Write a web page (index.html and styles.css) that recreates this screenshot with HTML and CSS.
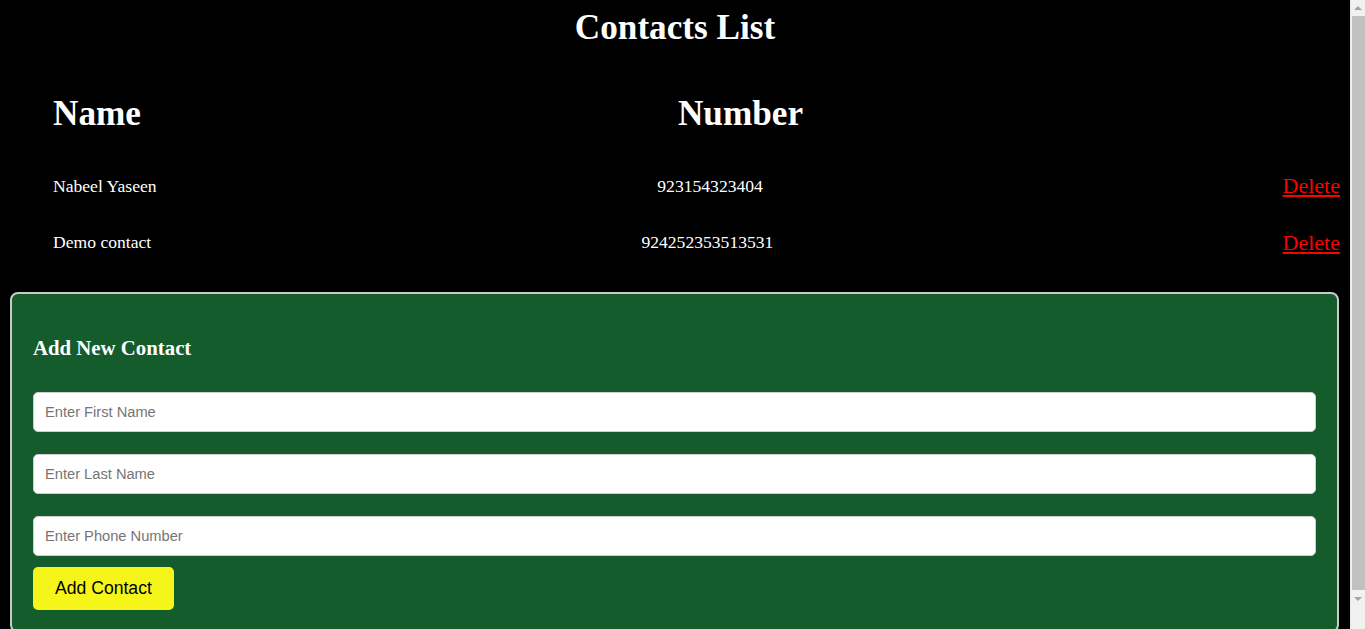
FILE: index.html
```html
<!DOCTYPE html>
<html lang="en">
<head>
<meta charset="utf-8">
<title>Contacts List</title>
<link rel="stylesheet" href="styles.css">
</head>
<body>
  <main class="page">
    <h1 class="title">Contacts List</h1>
    <section class="list">
      <div class="list-head">
        <h2 class="col col-name">Name</h2>
        <h2 class="col col-number">Number</h2>
      </div>
      <div class="rows">
        <div class="row">
          <span class="col col-name">Nabeel Yaseen</span>
          <span class="col col-number">923154323404</span>
          <span class="col col-action"><a href="#" class="delete">Delete</a></span>
        </div>
        <div class="row">
          <span class="col col-name">Demo contact</span>
          <span class="col col-number">924252353513531</span>
          <span class="col col-action"><a href="#" class="delete">Delete</a></span>
        </div>
      </div>
    </section>
    <section class="panel">
      <h3 class="panel-title">Add New Contact</h3>
      <form class="form">
        <input class="field" type="text" placeholder="Enter First Name">
        <input class="field" type="text" placeholder="Enter Last Name">
        <input class="field" type="text" placeholder="Enter Phone Number">
        <button class="add-btn" type="button">Add Contact</button>
      </form>
    </section>
  </main>
  <div class="scrollbar" aria-hidden="true">
    <div class="sb-arrow sb-up"></div>
    <div class="sb-thumb"></div>
    <div class="sb-arrow sb-down"></div>
  </div>
</body>
</html>
```

FILE: styles.css
```css
html {
  background: #000;
}

body {
  margin: 0;
  background: #000;
  color: #fff;
  font-family: "Liberation Serif", "Times New Roman", serif;
}

.page {
  margin-right: 15px;
  padding-top: 8px;
  padding-bottom: 19px;
}

.title {
  margin: 0;
  font-size: 35.2px;
  font-weight: bold;
  text-align: center;
}

.list {
  padding: 0 10px 0 53px;
}

.list-head {
  display: flex;
  margin-top: 45.5px;
}

.list-head h2 {
  margin: 0;
  font-size: 35.2px;
  font-weight: bold;
}

.col-name {
  flex: 0 0 auto;
  text-align: left;
}

.col-number {
  flex: 1 1 auto;
  text-align: center;
}

.col-action {
  flex: 0 0 auto;
  text-align: right;
  padding-left: 19px;
}

.rows {
  display: flex;
  flex-direction: column;
  gap: 30.7px;
  margin-top: 39.5px;
}

.row {
  display: flex;
  align-items: center;
  font-size: 17.6px;
}

.delete {
  color: #ff0000;
  font-size: 22px;
  text-decoration: underline;
}

.panel {
  margin: 36.5px 11px 0 10px;
  padding: 0 21px 21px;
  border: 2px solid #c9c9c9;
  border-radius: 8px;
  background: #155c2d;
}

.panel-title {
  margin: 0;
  padding-top: 41.8px;
  font-size: 20.8px;
  font-weight: bold;
}

.form {
  display: flex;
  flex-direction: column;
  margin-top: 20.8px;
}

.field {
  box-sizing: border-box;
  height: 40px;
  margin: 11px 0;
  padding: 0 11px;
  border: 1px solid #cfcfcf;
  border-radius: 5px;
  background: #fff;
  font-family: "Liberation Sans", Arial, sans-serif;
  font-size: 14.67px;
  color: #000;
}

.field::placeholder {
  color: #757575;
}

.add-btn {
  align-self: flex-start;
  margin: 0;
  padding: 11px 22px;
  border: 0;
  border-radius: 5px;
  background: #f5f51a;
  color: #000;
  font-family: "Liberation Sans", Arial, sans-serif;
  font-size: 17.6px;
  line-height: 21px;
}

/* browser scrollbar as shown in the screenshot */
.scrollbar {
  position: fixed;
  top: 0;
  right: 0;
  bottom: 0;
  width: 15px;
  background: #f1f1f1;
  display: flex;
  flex-direction: column;
  align-items: center;
  border-left: 1px solid #e8e8e8;
  box-sizing: border-box;
}

.sb-arrow {
  flex: 0 0 16px;
  width: 100%;
  position: relative;
}

.sb-up::after,
.sb-down::after {
  content: "";
  position: absolute;
  left: 50%;
  margin-left: -4px;
  border-left: 4px solid transparent;
  border-right: 4px solid transparent;
}

.sb-up::after {
  top: 6px;
  border-bottom: 4px solid #a3a3a3;
}

.sb-down::after {
  bottom: 5px;
  border-top: 4px solid #a3a3a3;
}

.sb-thumb {
  width: 13px;
  flex: 0 0 574px;
  background: #c1c1c1;
}
```
